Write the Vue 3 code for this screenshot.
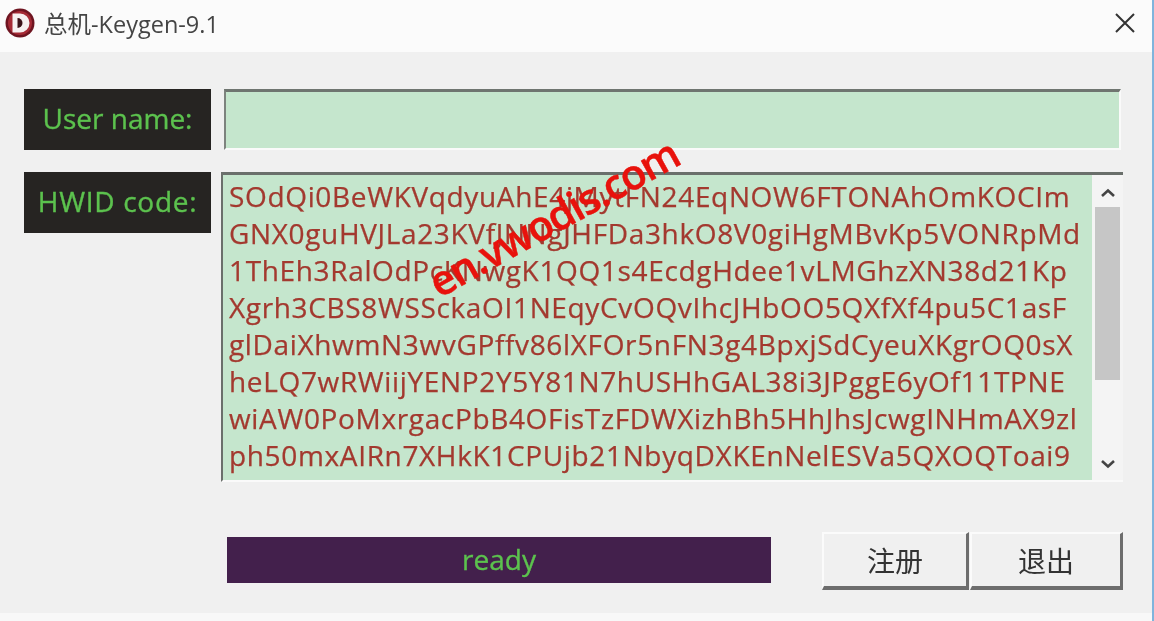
<script setup>
const lines = [
  'SOdQi0BeWKVqdyuAhE4jMytFN24EqNOW6FTONAhOmKOCIm',
  'GNX0guHVJLa23KVfJNNgJHFDa3hkO8V0giHgMBvKp5VONRpMd',
  '1ThEh3RalOdPcKNwgK1QQ1s4EcdgHdee1vLMGhzXN38d21Kp',
  'Xgrh3CBS8WSSckaOI1NEqyCvOQvIhcJHbOO5QXfXf4pu5C1asF',
  'glDaiXhwmN3wvGPffv86lXFOr5nFN3g4BpxjSdCyeuXKgrOQ0sX',
  'heLQ7wRWiijYENP2Y5Y81N7hUSHhGAL38i3JPggE6yOf11TPNE',
  'wiAW0PoMxrgacPbB4OFisTzFDWXizhBh5HhJhsJcwgINHmAX9zl',
  'ph50mxAIRn7XHkK1CPUjb21NbyqDXKEnNelESVa5QXOQToai9'
]
</script>

<template>
  <div class="window">
    <header class="titlebar">
      <div class="title-left">
        <svg class="logo" width="30" height="30" viewBox="0 0 30 30">
          <circle cx="15" cy="15" r="14.5" fill="#6e1420" />
          <circle cx="15" cy="15" r="12" fill="#a52a35" />
          <path d="M7.5 5.5h7.5a9.5 9.5 0 0 1 0 19H7.5z" fill="#f6f0f0" />
          <path d="M12.5 10v10a5 5 0 0 0 0-10z" fill="#3a1218" />
        </svg>
        <span class="title">总机-Keygen-9.1</span>
      </div>
      <svg class="close" width="22" height="22" viewBox="0 0 22 22">
        <path d="M2 2 L20 20 M20 2 L2 20" stroke="#333" stroke-width="2" fill="none" />
      </svg>
    </header>

    <main class="body">
      <div class="row row-name">
        <div class="label">User name:</div>
        <div class="name-input"></div>
      </div>

      <div class="row row-hwid">
        <div class="label hwid-label">HWID code:</div>
        <div class="code-box">
          <div class="code-text">
            <div v-for="line in lines" :key="line" class="code-line">{{ line }}</div>
          </div>
          <div class="scrollbar">
            <svg class="arrow" width="16" height="10" viewBox="0 0 16 10">
              <path d="M2 8 L8 2.5 L14 8" stroke="#444" stroke-width="2.6" fill="none" />
            </svg>
            <div class="track"><div class="thumb"></div></div>
            <svg class="arrow" width="16" height="10" viewBox="0 0 16 10">
              <path d="M2 2 L8 7.5 L14 2" stroke="#444" stroke-width="2.6" fill="none" />
            </svg>
          </div>
        </div>
      </div>

      <div class="footer">
        <div class="status">ready</div>
        <div class="buttons">
          <button class="btn">注册</button>
          <button class="btn btn-second">退出</button>
        </div>
      </div>
    </main>

    <div class="bottom-strip"></div>
    <div class="watermark">en.vwodis.com</div>
  </div>
</template>

<style>
html, body { margin: 0; padding: 0; background: #f0f0f0; }
</style>

<style scoped>
.window {
  position: relative;
  width: 1154px;
  height: 621px;
  overflow: hidden;
  background: #f0f0f0;
  border-right: 2px solid #7fb4dc;
  box-sizing: border-box;
  font-family: "Open Sans", "Noto Sans", "Noto Sans CJK SC", sans-serif;
  filter: blur(0.55px);
}
.titlebar {
  height: 52px;
  background: #fbfbfb;
  display: flex;
  align-items: center;
  justify-content: space-between;
  padding: 0 16px 6px 5px;
  box-sizing: border-box;
}
.title-left { display: flex; align-items: center; gap: 9px; }
.logo { display: block; }
.title { font-size: 23.5px; color: #444; }
.close { display: block; }
.body {
  padding: 37px 29px 0 24px;
  display: flex;
  flex-direction: column;
}
.row { display: flex; align-items: flex-start; }
.label {
  width: 187px;
  height: 61px;
  padding-bottom: 3px;
  box-sizing: border-box;
  background: #262422;
  color: #5cc24e;
  font-size: 28px;
  -webkit-text-stroke: 0.35px #5cc24e;
  display: flex;
  align-items: center;
  justify-content: center;
  flex: none;
}
.row-name { gap: 13px; }
.name-input {
  flex: 1;
  height: 61px;
  margin-right: 2px;
  background: #c5e6cd;
  border-top: 3px solid #6f7570;
  border-left: 2px solid #7d837e;
  border-bottom: 2px solid #fafafa;
  border-right: 2px solid #fafafa;
  box-sizing: border-box;
}
.row-hwid { margin-top: 22px; gap: 10px; }
.hwid-label { letter-spacing: 0.7px; }
.code-box {
  flex: 1;
  height: 310px;
  display: flex;
  border-top: 3px solid #6a6f6b;
  border-left: 2px solid #6a6f6b;
  border-bottom: 2px solid #fafafa;
  box-sizing: border-box;
  background: #c5e6cd;
}
.code-text {
  flex: 1;
  padding: 3px 0 0 6px;
  color: #a3392f;
  font-size: 28px;
  -webkit-text-stroke: 0.25px #a3392f;
  letter-spacing: 0.65px;
  line-height: 37px;
  overflow: hidden;
  white-space: nowrap;
}
.scrollbar {
  width: 31px;
  flex: none;
  background: #f4f4f4;
  display: flex;
  flex-direction: column;
  align-items: center;
  padding: 13px 0 11px;
  box-sizing: border-box;
}
.arrow { display: block; flex: none; }
.track { flex: 1; width: 100%; padding: 9px 3px 0; box-sizing: border-box; margin-bottom: 4px; }
.thumb { height: 173px; background: #c6c6c6; }
.footer {
  margin-top: 50px;
  padding-left: 203px;
  display: flex;
  align-items: flex-start;
  justify-content: space-between;
}
.status {
  width: 544px;
  height: 46px;
  margin-top: 5px;
  padding-bottom: 2px;
  box-sizing: border-box;
  background: #43204c;
  color: #5cc24e;
  font-size: 28px;
  -webkit-text-stroke: 0.35px #5cc24e;
  display: flex;
  align-items: center;
  justify-content: center;
}
.buttons { display: flex; gap: 1px; }
.btn {
  width: 147px;
  height: 58px;
  padding: 0;
  background: #f0f0f0;
  border: none;
  border-top: 2px solid #fbfbfb;
  border-left: 2px solid #fbfbfb;
  border-right: 3px solid #6d6d6d;
  border-bottom: 4px solid #6d6d6d;
  box-sizing: border-box;
  color: #333;
  font-family: "Noto Sans CJK SC", sans-serif;
  font-size: 28px;
}
.btn-second { width: 153px; }
.bottom-strip {
  position: absolute;
  left: 0;
  right: 0;
  bottom: 0;
  height: 8px;
  background: #f8f8f8;
}
.watermark {
  position: absolute;
  left: 414px;
  top: 187px;
  color: #e8120c;
  font-size: 41.5px;
  font-weight: 600;
  -webkit-text-stroke: 0.5px #e8120c;
  letter-spacing: -1.5px;
  line-height: 60px;
  white-space: nowrap;
  transform: rotate(-29deg);
  font-family: "Open Sans", sans-serif;
}
</style>
